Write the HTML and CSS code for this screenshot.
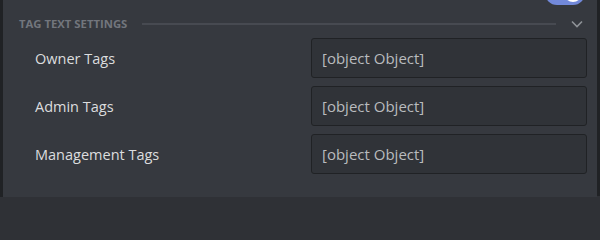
FILE: index.html
```html
<!DOCTYPE html>
<html>
<head>
<meta charset="utf-8">
<link rel="stylesheet" href="styles.css">
</head>
<body>
<div class="frame">
  <div class="edge"></div>
  <div class="panel">
    <div class="prev-row">
      <span class="prev-glyph">p</span>
      <div class="toggle"><div class="knob"></div></div>
    </div>
    <div class="section-head">
      <span class="section-title">Tag Text Settings</span>
      <div class="divider"></div>
      <svg class="chevron" width="12" height="8" viewBox="0 0 12 8"><path d="M1 1.5 L6 6.5 L11 1.5" fill="none" stroke="#8e9297" stroke-width="1.6"/></svg>
    </div>
    <div class="rows">
      <div class="row">
        <span class="label">Owner Tags</span>
        <div class="input">[object Object]</div>
      </div>
      <div class="row">
        <span class="label">Admin Tags</span>
        <div class="input">[object Object]</div>
      </div>
      <div class="row">
        <span class="label">Management Tags</span>
        <div class="input">[object Object]</div>
      </div>
    </div>
  </div>
  <div class="edge edge-right"></div>
</div>
</body>
</html>
```
FILE: styles.css
```css
html, body {
  margin: 0;
  padding: 0;
  background: #2f3136;
  font-family: "Open Sans", "Noto Sans", sans-serif;
}
.frame {
  display: flex;
  height: 197px;
  width: 600px;
}
.edge {
  width: 3px;
  background: #202225;
}
.edge-right {
  width: 3px;
  height: 196px;
}
.panel {
  flex: 1;
  background: #36393f;
  overflow: hidden;
  display: flex;
  flex-direction: column;
}
.prev-row {
  height: 24px;
  margin-top: -19px;
  display: flex;
  align-items: flex-start;
  padding-right: 12px;
}
.prev-glyph {
  margin-left: 226px;
  margin-top: -4px;
  color: #dcddde;
  font-size: 16px;
  line-height: 24px;
  flex: 1;
}
.toggle {
  width: 40px;
  height: 24px;
  border-radius: 12px;
  background: #7289da;
  display: flex;
  align-items: center;
  justify-content: flex-end;
  padding-right: 3px;
  box-sizing: border-box;
}
.knob {
  width: 18px;
  height: 18px;
  border-radius: 50%;
  background: #fff;
}
.section-head {
  display: flex;
  align-items: center;
  height: 14px;
  margin-top: 12px;
  padding-left: 16px;
  padding-right: 14px;
}
.section-title {
  font-size: 11.3px;
  font-weight: 700;
  text-transform: uppercase;
  color: #72767d;
  line-height: 14px;
}
.divider {
  flex: 1;
  height: 2px;
  background: #474a51;
  margin-left: 15px;
  margin-right: 15px;
}
.chevron {
  display: block;
}
.rows {
  display: flex;
  flex-direction: column;
  gap: 8px;
  margin-top: 7px;
  padding-left: 32px;
  padding-right: 10px;
}
.row {
  display: flex;
  align-items: center;
  height: 40px;
}
.label {
  flex: 1;
  font-size: 14.5px;
  color: #dcddde;
}
.input {
  width: 276px;
  height: 40px;
  box-sizing: border-box;
  border: 1px solid #202225;
  border-radius: 3px;
  background: #303338;
  padding: 0 10px;
  display: flex;
  align-items: center;
  font-size: 15px;
  color: #b9bbbe;
}
```
